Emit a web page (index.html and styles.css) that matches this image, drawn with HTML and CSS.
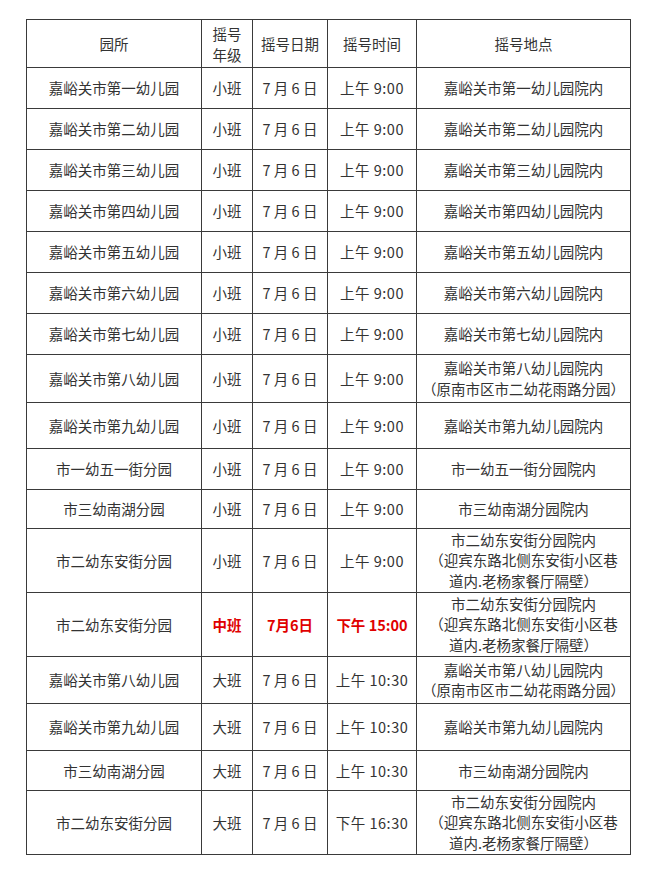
FILE: index.html
```html
<!DOCTYPE html>
<html lang="zh-CN">
<head>
<meta charset="utf-8">
<title>摇号安排</title>
<link rel="stylesheet" href="styles.css">
</head>
<body>
<table class="sched">
  <colgroup>
    <col class="c-name">
    <col class="c-grade">
    <col class="c-date">
    <col class="c-time">
    <col class="c-place">
  </colgroup>
  <tr class="h48">
    <td>园所</td><td class="two">摇号<br>年级</td><td>摇号日期</td><td>摇号时间</td><td>摇号地点</td>
  </tr>
  <tr class="h41"><td>嘉峪关市第一幼儿园</td><td>小班</td><td>7 月 6 日</td><td class="time">上午 9:00</td><td>嘉峪关市第一幼儿园院内</td></tr>
  <tr class="h41"><td>嘉峪关市第二幼儿园</td><td>小班</td><td>7 月 6 日</td><td class="time">上午 9:00</td><td>嘉峪关市第二幼儿园院内</td></tr>
  <tr class="h41"><td>嘉峪关市第三幼儿园</td><td>小班</td><td>7 月 6 日</td><td class="time">上午 9:00</td><td>嘉峪关市第三幼儿园院内</td></tr>
  <tr class="h41"><td>嘉峪关市第四幼儿园</td><td>小班</td><td>7 月 6 日</td><td class="time">上午 9:00</td><td>嘉峪关市第四幼儿园院内</td></tr>
  <tr class="h41"><td>嘉峪关市第五幼儿园</td><td>小班</td><td>7 月 6 日</td><td class="time">上午 9:00</td><td>嘉峪关市第五幼儿园院内</td></tr>
  <tr class="h41"><td>嘉峪关市第六幼儿园</td><td>小班</td><td>7 月 6 日</td><td class="time">上午 9:00</td><td>嘉峪关市第六幼儿园院内</td></tr>
  <tr class="h41"><td>嘉峪关市第七幼儿园</td><td>小班</td><td>7 月 6 日</td><td class="time">上午 9:00</td><td>嘉峪关市第七幼儿园院内</td></tr>
  <tr class="h48"><td>嘉峪关市第八幼儿园</td><td>小班</td><td>7 月 6 日</td><td class="time">上午 9:00</td><td class="multi">嘉峪关市第八幼儿园院内<br>（原南市区市二幼花雨路分园）</td></tr>
  <tr class="h46"><td>嘉峪关市第九幼儿园</td><td>小班</td><td>7 月 6 日</td><td class="time">上午 9:00</td><td>嘉峪关市第九幼儿园院内</td></tr>
  <tr class="h41"><td>市一幼五一街分园</td><td>小班</td><td>7 月 6 日</td><td class="time">上午 9:00</td><td>市一幼五一街分园院内</td></tr>
  <tr class="h39"><td>市三幼南湖分园</td><td>小班</td><td>7 月 6 日</td><td class="time">上午 9:00</td><td>市三幼南湖分园院内</td></tr>
  <tr class="h64"><td>市二幼东安街分园</td><td>小班</td><td>7 月 6 日</td><td class="time">上午 9:00</td><td class="multi">市二幼东安街分园院内<br>（迎宾东路北侧东安街小区巷<br>道内.老杨家餐厅隔壁）</td></tr>
  <tr class="h64"><td>市二幼东安街分园</td><td class="hot">中班</td><td class="hot">7月6日</td><td class="hot">下午 15:00</td><td class="multi">市二幼东安街分园院内<br>（迎宾东路北侧东安街小区巷<br>道内.老杨家餐厅隔壁）</td></tr>
  <tr class="h47"><td>嘉峪关市第八幼儿园</td><td>大班</td><td>7 月 6 日</td><td class="time">上午 10:30</td><td class="multi">嘉峪关市第八幼儿园院内<br>（原南市区市二幼花雨路分园）</td></tr>
  <tr class="h47"><td>嘉峪关市第九幼儿园</td><td>大班</td><td>7 月 6 日</td><td class="time">上午 10:30</td><td>嘉峪关市第九幼儿园院内</td></tr>
  <tr class="h40"><td>市三幼南湖分园</td><td>大班</td><td>7 月 6 日</td><td class="time">上午 10:30</td><td>市三幼南湖分园院内</td></tr>
  <tr class="h64"><td>市二幼东安街分园</td><td>大班</td><td>7 月 6 日</td><td class="time">下午 16:30</td><td class="multi">市二幼东安街分园院内<br>（迎宾东路北侧东安街小区巷<br>道内.老杨家餐厅隔壁）</td></tr>
</table>
</body>
</html>
```

FILE: styles.css
```css
html, body {
  margin: 0;
  padding: 0;
  background: #ffffff;
}

body {
  padding: 19px 0 0 26px;
  font-family: "Noto Sans CJK SC", "Liberation Sans", sans-serif;
  color: #333333;
}

.sched {
  border-collapse: collapse;
  table-layout: fixed;
  width: 605px;
  font-size: 14.5px;
  font-weight: 400;
}

.c-name { width: 175px; }
.c-grade { width: 51px; }
.c-date { width: 75px; }
.c-time { width: 89px; }
.c-place { width: 214px; }

.sched td {
  border: 1px solid #3a3a3a;
  padding: 0;
  text-align: center;
  vertical-align: middle;
  line-height: 20px;
  white-space: nowrap;
}

.sched td.two {
  line-height: 21px;
}

.sched td.multi {
  line-height: 20.5px;
}

.sched td.time {
  letter-spacing: 0.5px;
}

.sched td.hot {
  color: #e00000;
  font-weight: 700;
}

.h39 { height: 39px; }
.h40 { height: 40px; }
.h41 { height: 41px; }
.h46 { height: 46px; }
.h47 { height: 47px; }
.h48 { height: 48px; }
.h64 { height: 64px; }
```
